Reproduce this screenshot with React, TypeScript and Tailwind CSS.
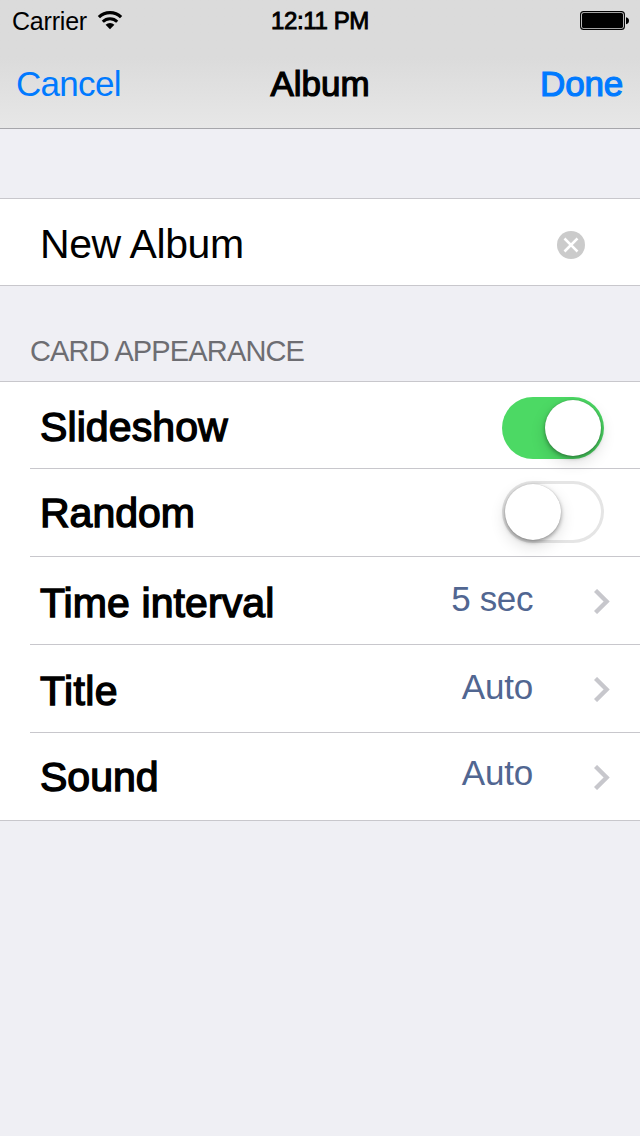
import { useState, type ReactNode } from "react";

function WifiIcon() {
  return (
    <svg width="26" height="20" viewBox="0 0 26 20" fill="none" stroke="#000">
      <path d="M1.9 7.2A15.9 15.9 0 0 1 24.1 7.2" strokeWidth="3.2" />
      <path d="M5.8 11.7A10.2 10.2 0 0 1 20.2 11.7" strokeWidth="3" />
      <path d="M13 19.2L8.6 14.8A6.2 6.2 0 0 1 17.4 14.8Z" fill="#000" stroke="none" />
    </svg>
  );
}

function BatteryIcon() {
  return (
    <svg width="50" height="20" viewBox="0 0 50 20">
      <rect x="0.6" y="0.6" width="43.8" height="17.8" rx="3" fill="none" stroke="#000" strokeWidth="1.1" />
      <rect x="2" y="2" width="41" height="15" rx="1.6" fill="#000" />
      <path d="M46 6.2C50 6.6 50 12.8 46 13.2Z" fill="#000" />
    </svg>
  );
}

function ClearIcon() {
  return (
    <svg width="28" height="28" viewBox="0 0 28 28">
      <circle cx="14" cy="14" r="14" fill="#cbcbcb" />
      <path d="M8.4 8.4L19.6 19.6M19.6 8.4L8.4 19.6" stroke="#fff" strokeWidth="2.6" strokeLinecap="square" />
    </svg>
  );
}

function Chevron() {
  return (
    <svg className="mt-8 ml-[61px]" width="16" height="25" viewBox="0 0 16 25" fill="none">
      <path d="M1.5 1.5L12.6 12.5L1.5 23.5" stroke="#c7c7cc" strokeWidth="4.4" />
    </svg>
  );
}

function Switch({ initial, className }: { initial: boolean; className: string }) {
  const [on, setOn] = useState(initial);
  return (
    <button
      type="button"
      role="switch"
      aria-checked={on}
      onClick={() => setOn(!on)}
      className={`mr-9 flex h-[62px] w-[102px] rounded-full p-[3px] ${className} ${
        on ? "justify-end bg-[#4cd964]" : "justify-start bg-white shadow-[inset_0_0_0_3px_#e5e5e5]"
      }`}
    >
      <span className="size-14 rounded-full bg-white shadow-[0_6px_16px_rgba(0,0,0,0.14),0_2px_4px_rgba(0,0,0,0.35),0_0_1px_rgba(0,0,0,0.2)]" />
    </button>
  );
}

function Row({ label, offset, spacing, last, children }: {
  label: string;
  offset: string;
  spacing: string;
  last?: boolean;
  children: ReactNode;
}) {
  return (
    <div className={`flex h-[88px] items-start border-b border-[#c8c7cc] ${last ? "pl-10" : "ml-[30px] pl-2.5"}`}>
      <span className={`flex-1 text-[41px] leading-[48px] whitespace-nowrap [-webkit-text-stroke:1.4px_#000] ${offset} ${spacing}`}>
        {label}
      </span>
      {children}
    </div>
  );
}

function Value({ text, offset, spacing }: { text: string; offset: string; spacing: string }) {
  return <span className={`text-[35px] leading-10 text-[#516691] ${offset} ${spacing}`}>{text}</span>;
}

export default function App() {
  return (
    <div className="flex h-[1136px] w-[640px] flex-col overflow-hidden bg-[#efeff4] font-['Liberation_Sans',Arial,sans-serif] text-black">
      <header className="h-[129px] border-b border-[#a6a6ab] bg-linear-to-b from-[#dbdbdb] from-45% to-[#e7e7e7]">
        <div className="grid h-10 grid-cols-3 items-start">
          <div className="flex items-start pl-3">
            <span className="mt-[5px] text-[25px] leading-8 tracking-[-0.2px]">Carrier</span>
            <span className="mt-2.5 ml-2.5">
              <WifiIcon />
            </span>
          </div>
          <span className="mt-[5px] text-center text-[24px] leading-8 tracking-[-0.4px] [-webkit-text-stroke:0.9px_#000]">12:11 PM</span>
          <div className="mt-[11px] mr-[10px] flex justify-end">
            <BatteryIcon />
          </div>
        </div>
        <nav className="grid grid-cols-3 pt-6 text-[35px] leading-10">
          <button type="button" className="pl-4 text-left tracking-[-0.7px] text-[#007aff]">Cancel</button>
          <h1 className="text-center [-webkit-text-stroke:1.2px_#000]">Album</h1>
          <button type="button" className="pr-[17px] text-right tracking-[-0.2px] text-[#007aff] [-webkit-text-stroke:1.2px_#007aff]">Done</button>
        </nav>
      </header>

      <section className="mt-[69px] flex h-[88px] items-start border-y border-[#c8c7cc] bg-white pl-10">
        <span className="mt-[21px] flex-1 text-[41px] leading-[48px] tracking-[-0.4px]">New Album</span>
        <button type="button" aria-label="Clear" className="mt-8 mr-[55px]">
          <ClearIcon />
        </button>
      </section>

      <h2 className="h-[95px] pt-[49px] pl-[30px] text-[29px] leading-8 tracking-[-0.85px] text-[#6d6d72]">CARD APPEARANCE</h2>

      <section className="border-t border-[#c8c7cc] bg-white">
        <div className="-mt-px">
          <Row label="Slideshow" offset="mt-[22px]" spacing="tracking-[0.1px]">
            <Switch initial={true} className="mt-4" />
          </Row>
        </div>
        <Row label="Random" offset="mt-5" spacing="tracking-normal">
          <Switch initial={false} className="mt-3" />
        </Row>
        <Row label="Time interval" offset="mt-[22px]" spacing="tracking-[0.1px]">
          <Value text="5 sec" offset="mt-[22px]" spacing="tracking-[-0.4px]" />
          <span className="mr-[30px]"><Chevron /></span>
        </Row>
        <Row label="Title" offset="mt-[22px]" spacing="tracking-[0.4px]">
          <Value text="Auto" offset="mt-[22px]" spacing="tracking-[-0.2px]" />
          <span className="mr-[30px]"><Chevron /></span>
        </Row>
        <Row label="Sound" offset="mt-5" spacing="tracking-normal" last>
          <Value text="Auto" offset="mt-5" spacing="tracking-[-0.2px]" />
          <span className="mr-[30px]"><Chevron /></span>
        </Row>
      </section>
    </div>
  );
}
